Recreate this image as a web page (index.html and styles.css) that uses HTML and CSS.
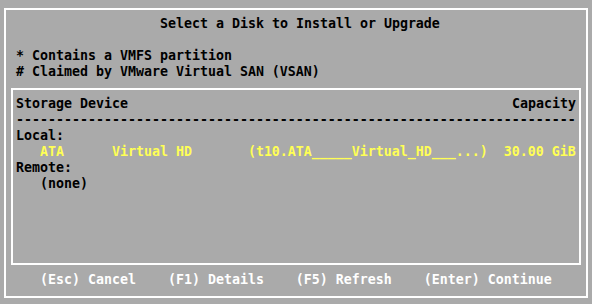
FILE: index.html
```html
<!DOCTYPE html>
<html lang="en">
<head>
    <meta charset="UTF-8">
    <title>Select a Disk to Install or Upgrade</title>
    <link rel="stylesheet" href="styles.css">
</head>
<body>

<div class="frame">
    <div class="title">Select a Disk to Install or Upgrade</div>
    <div class="blank"></div>
    <div class="notes">
        <div class="line">* Contains a VMFS partition</div>
        <div class="line"># Claimed by VMware Virtual SAN (VSAN)</div>
    </div>

    <div class="disk-box">
        <div class="line header">
            <span>Storage Device</span>
            <span>Capacity</span>
        </div>
        <div class="line rule">----------------------------------------------------------------------</div>
        <div class="line">Local:</div>
        <div class="line disk selected">   ATA      Virtual HD       (t10.ATA_____Virtual_HD___...)  30.00 GiB</div>
        <div class="line">Remote:</div>
        <div class="line">   (none)</div>
    </div>

    <div class="footer">(Esc) Cancel    (F1) Details    (F5) Refresh    (Enter) Continue</div>
</div>

</body>
</html>
```

FILE: styles.css
```css
:root {
    --screen-bg: #aaaaaa;
    --text: #000000;
    --line: #ffffff;
    --highlight: #ffff55;
    --key-text: #ffffff;
}

* {
    box-sizing: border-box;
}

body {
    margin: 0;
    width: 592px;
    height: 304px;
    overflow: hidden;
    background: var(--screen-bg);
    color: var(--text);
    font-family: "DejaVu Sans Mono", "Liberation Mono", monospace;
    font-weight: bold;
    font-size: 13.29px;
    line-height: 16px;
}

.frame {
    margin: 8px 4px 0 4px;
    height: 290px;
    border: 2px solid var(--line);
    padding-top: 6px;
}

.line,
.title,
.footer {
    height: 16px;
    white-space: pre;
}

.title {
    padding-left: 154px;
}

.blank {
    height: 16px;
}

.notes {
    padding-left: 10px;
}

.disk-box {
    margin: 8px 5px 0 5px;
    height: 177px;
    border: 2px solid var(--line);
    padding: 6px 3px 0 3px;
}

.header {
    display: flex;
    justify-content: space-between;
}

.rule {
    overflow: hidden;
}

.selected {
    color: var(--highlight);
}

.footer {
    margin-top: 7px;
    padding-left: 34px;
    color: var(--key-text);
}
```
